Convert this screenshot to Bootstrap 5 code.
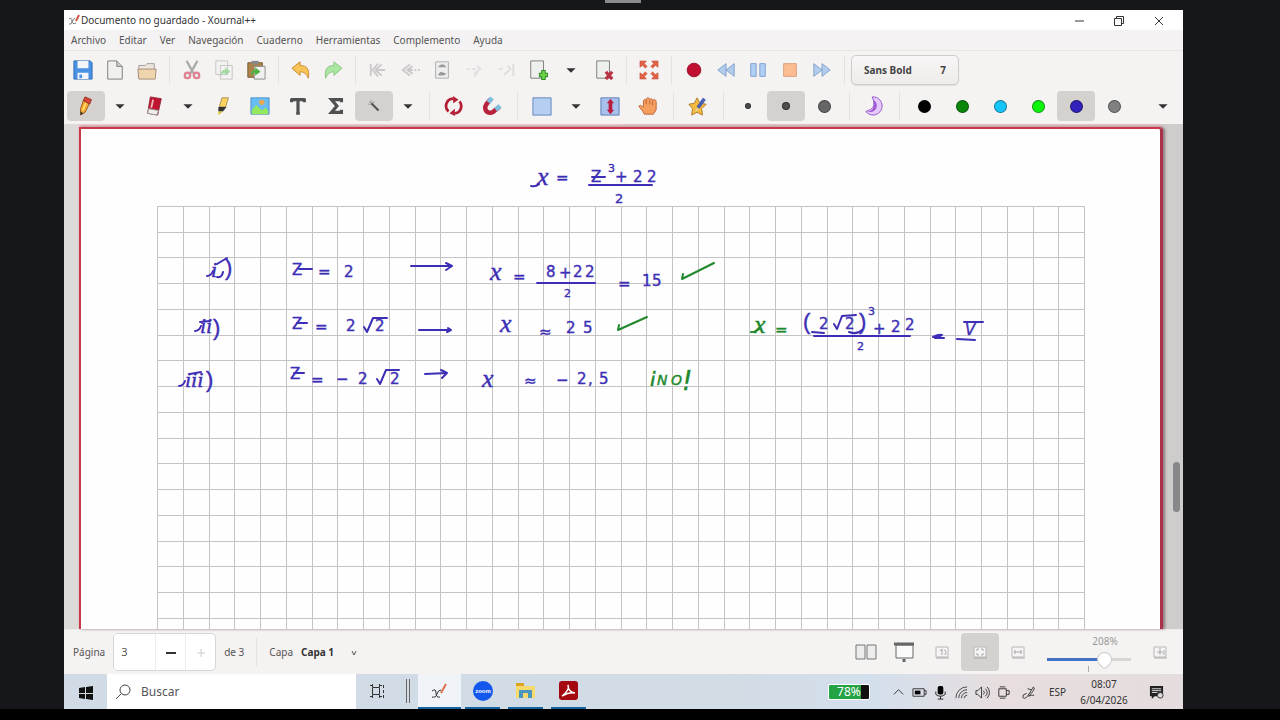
<!DOCTYPE html>
<html lang="es">
<head>
<meta charset="utf-8">
<meta name="viewport" content="width=device-width, initial-scale=1">
<title>Documento no guardado - Xournal++</title>
<link href="https://cdn.jsdelivr.net/npm/bootstrap@5.3.0/dist/css/bootstrap.min.css" rel="stylesheet">
<style>
  body { background: #15171a; font-family: "Noto Sans", sans-serif; font-size: 11px; line-height: 16px; color: #555; }
  button, input { font: inherit; color: inherit; }
  .stage { height: 100vh; min-height: 480px; }
  .grip { width: 36px; height: 3px; margin-left: 47.3%; background: #8a8b8c; }
  .top-edge { height: 10px; flex: none; }
  .app { margin: 0 97px 0 5%; background: #f5f2f2; min-height: 0; }
  .titlebar { height: 20px; background: #fff; color: #333; }
  .titlebar button, .menus button, .tool, .tray button { border: 0; background: none; padding: 0; }
  .titlebar button { width: 40px; }
  .titlebar h1 { font: 10px/20px "Noto Sans", sans-serif; padding-left: 1px; }
  .menus { height: 21px; gap: 13px; padding-left: 7px; background: #f4f2f2; border-bottom: 1px solid #e9e6e6; font-size: 10px; }
  .tools { height: 37px; }
  .tools.first { padding-left: 3px; }
  .tools.second { padding: 0 5px 0 3px; height: 36px; }
  .tool { height: 30px; width: 38px; border-radius: 4px; display: flex; align-items: center; justify-content: center; flex: none; }
  .first .tool { width: 32px; }
  .tool.drop { width: 30px; }
  .first .tool.drop { width: 34px; }
  .tool.on { background: #d5d1cf; }
  .tool svg { width: 20px; height: 20px; flex: none; }
  .status .tool svg { width: 22px; height: 22px; }
  .rule { width: 1px; height: 28px; background: #e6e2e2; margin: 0 6px 0 6px; flex: none; }
  .second .rule { margin-right: 5px; }
  .faded { opacity: .45; }
  .font-btn { width: 108px; height: 30px; border: 1px solid #d0cccb; border-radius: 5px; background: linear-gradient(#f8f6f6, #eeebea); font-weight: bold; font-size: 10px; padding: 0 12px; box-shadow: 0 1px 1px #ddd; color: #444; }
  .dot { border-radius: 50%; display: block; border: 1px solid rgba(0,0,0,.4); width: 13px; height: 13px; }
  .dot.s { width: 6px; height: 6px; background: #4d4d4d; }
  .dot.m { width: 8px; height: 8px; background: #4d4d4d; }
  .dot.l { background: #666; }
  .workspace { min-height: 0; background: linear-gradient(90deg, #dedada 0, #dedada 50%, #cfcccc 50%); padding: 3px 20px 0 15px; position: relative; }
  .sheet { background: #fefefe; border: 2px solid #c9384b; border-right: 3px solid #a93248; border-bottom: 0; border-top-right-radius: 4px; box-shadow: 2px 0 3px #8a7b7e, 0 -2px 2px #f3b9bd; overflow: hidden; }
  .sheet svg { width: 100%; height: 100%; display: block; }
  .thumb { position: absolute; right: 3px; top: 67%; width: 7px; height: 50px; border-radius: 4px; background: #88878a; }
  .ink { font-family: "DejaVu Sans", sans-serif; font-size: 15px; fill: #3d2fb5; stroke: #3d2fb5; stroke-width: .4px; }
  .ink .var { font-family: "Liberation Serif", serif; font-style: italic; font-size: 26px; }
  .ink .num { font-family: "Liberation Serif", serif; font-style: italic; font-size: 22px; }
  .ink .paren { font-size: 22px; font-family: "Liberation Sans", sans-serif; }
  .ink .tiny { font-size: 11px; }
  .ink .low { font-size: 13px; }
  .ink .ok { fill: #20882c; stroke: #20882c; }
  .ink .slant { font-style: italic; }
  .stroke { fill: none; stroke: #3d2fb5; stroke-width: 2; stroke-linecap: round; stroke-linejoin: round; }
  .stroke.ok { stroke: #20882c; }
  .status { height: 45px; font-size: 10px; border-top: 1px solid #eeebeb; padding-left: 1px; }
  .spin { width: 103px; height: 38px; border: 1px solid #d9d5d4; border-radius: 5px; background: #fff; overflow: hidden; }
  .spin input { width: 41px; border: 0; padding: 0 0 0 7px; font-size: 11px; }
  .spin button { flex: 1; border: 0; border-left: 1px solid #eee; background: none; padding: 0; }
  .status .tool { height: 38px; width: 38px; }
  .status .rule { margin: 0 4px 0 8px; }
  .pick { border: 0; background: none; width: 56px; padding: 0; appearance: none; font-weight: bold; color: #333; background: url("data:image/svg+xml,%3Csvg xmlns='http://www.w3.org/2000/svg' width='6' height='6'%3E%3Cpath d='M1 1l2 4 2-4' fill='none' stroke='%23555'/%3E%3C/svg%3E") no-repeat right 6px; }
  .zoomer { width: 84px; margin: 0 10px; position: relative; }
  .zoomer label { font-size: 10px; line-height: 14px; padding-left: 32px; margin-top: -2px; color: #999; }
  .zoomer input { appearance: none; width: 84px; height: 18px; background: linear-gradient(90deg, #4273c5 58px, #d8d5d5 58px) center / 100% 3px no-repeat; margin: 0; margin-top: 2px; }
  .zoomer input::-webkit-slider-thumb { appearance: none; width: 15px; height: 15px; background: #fff; border: 1px solid #ccc; border-radius: 50% 50% 4px 50%; transform: rotate(45deg); }
  .zoomer i { position: absolute; left: 41px; bottom: -4px; width: 1px; height: 6px; background: #aaa; }
  .taskbar { height: 35px; background: linear-gradient(90deg, #d0dbe6, #d2dce5 60%, #d3dfec 72%, #e8dedf 84%, #e4dcdd); color: #333; }
  .start { width: 43px; border: 0; background: none; padding: 0; }
  .search { width: 249px; background: #fff; border: 0; gap: 9px; padding-left: 8px; }
  .search input { border: 0; width: 160px; font-size: 12px; outline: 0; padding: 0; }
  .search input::placeholder { color: #555; opacity: 1; }
  .task { width: 43px; border: 0; background: none; padding: 0 0 2px; display: flex; align-items: center; justify-content: center; position: relative; }
  .task.split { width: 19px; }
  .task.open::after { content: ""; position: absolute; left: 4px; right: 4px; bottom: 0; height: 2px; background: #15639f; }
  .task.current { background: #f0f3f7; }
  .task.current::after { left: 0; right: 0; }
  .battery { width: 42px; height: 16px; border: 1px solid #fff; border-radius: 2px; background: linear-gradient(90deg, #23a344 32px, #101010 32px); color: #fff; font-size: 12px; line-height: 14px; margin-right: 18px; }
  .tray button { width: 21px; height: 22px; }
  .tray svg { width: 15px; height: 15px; }
  .lang { font-size: 10px; padding-left: 10px; }
  .clock { width: 56px; font-size: 10px; line-height: 16px; }
  .under { height: 11px; background: #000; flex: none; overflow: hidden; }
</style>
</head>
<body>
<svg width="0" height="0" class="position-absolute" aria-hidden="true">
  <defs>
    <symbol id="tri" viewBox="0 0 22 22"><path d="M6 9h10l-5 5z" fill="#333"/></symbol>
    <symbol id="undo" viewBox="0 0 22 22"><path d="M1 9 10 2v4c7 0 11 4 9 14-2-5-5-7-9-7v4z" fill="#f9c455" stroke="#c4872d"/></symbol>
    <symbol id="rew" viewBox="0 0 22 22"><path d="M11 4v14L2 11zM20 4v14l-9-7z" fill="#b4ccec" stroke="#7d9ecb"/></symbol>
    <symbol id="sheet" viewBox="0 0 22 22"><path d="M3 1h14v19H3z" fill="#eef0ee" stroke="#777"/></symbol>
    <symbol id="zbox" viewBox="0 0 22 22"><path d="M5 6h12v10H5z" fill="#f6f4f4" stroke="#b9b6b6"/><path d="M5 17h13" stroke="#aaa"/></symbol>
  </defs>
</svg>
<div class="stage d-flex flex-column">
  <div class="top-edge"><div class="grip"></div></div>
  <main class="app flex-fill d-flex flex-column">
    <header class="titlebar d-flex align-items-center flex-shrink-0">
      <svg width="12" height="12" viewBox="0 0 12 12" class="ms-1 flex-shrink-0"><path d="M1 5q3-2 3 2t4 2M7 4Q5 5 4 8t-3 2" fill="none" stroke="#777"/><path d="M8 7l3-6" stroke="#d35445" stroke-width="2"/></svg>
      <h1 class="m-0 flex-fill">Documento no guardado - Xournal++</h1>
      <button aria-label="Minimizar"><svg width="10" height="10"><path d="M1 5h9" stroke="#333"/></svg></button>
      <button aria-label="Restaurar"><svg width="10" height="10" fill="none" stroke="#333"><path d="M.5 2.500h7v7h-7zM2.500 2.500v-2h7v7h-2"/></svg></button>
      <button aria-label="Cerrar" class="me-1"><svg width="10" height="10"><path d="M1 1l8 8M9 1L1 9" stroke="#333"/></svg></button>
    </header>
    <nav class="menus d-flex align-items-center flex-shrink-0" aria-label="Menú">
      <button>Archivo</button><button>Editar</button><button>Ver</button><button>Navegación</button><button>Cuaderno</button><button>Herramientas</button><button>Complemento</button><button>Ayuda</button>
    </nav>
    <div class="tools first d-flex align-items-center flex-shrink-0" role="toolbar" aria-label="Archivo y audio">
      <button class="tool" aria-label="Guardar"><svg viewBox="0 0 22 22"><path d="M1 1h18l2 2v18H1z" fill="#4b91e3" stroke="#2868b4"/><path d="M5 1h12v8H5zM5 14h12v7H5z" fill="#f3f6fa"/><path d="M7 16h3v4H7z" fill="#4b91e3"/></svg></button>
      <button class="tool" aria-label="Nuevo"><svg viewBox="0 0 22 22"><path d="M3 1h10l6 6v14H3z" fill="#f0f0ef" stroke="#777"/><path d="M13 1v6h6" fill="#ccc" stroke="#777"/></svg></button>
      <button class="tool" aria-label="Abrir"><svg viewBox="0 0 22 22"><path d="M2 19V6h7l2-2h8v15z" fill="#eee6dc" stroke="#999"/><path d="M1 10h20l-1 11H2z" fill="#efd4ae" stroke="#a18a71"/></svg></button>
      <span class="rule"></span>
      <button class="tool" aria-label="Cortar"><svg viewBox="0 0 22 22"><path d="M5 1l8 14M17 1L9 15" stroke="#aaa" stroke-width="2.500"/><g fill="none" stroke="#dc8291" stroke-width="2.500"><circle cx="6" cy="17" r="3"/><circle cx="16" cy="17" r="3"/></g></svg></button>
      <button class="tool" aria-label="Copiar"><svg viewBox="0 0 22 22"><path d="M2 1h13v15H2zM7 6h13v15H7z" fill="#f3f4f2" stroke="#c2c2c2"/><path d="M18 13l-6-5v3c-4 0-5 3-4 7 1-3 2-4 4-4v3z" fill="#a3d9a0"/></svg></button>
      <button class="tool" aria-label="Pegar"><svg viewBox="0 0 22 22"><path d="M2 3h16v16H2z" fill="#ad8347" stroke="#755a31"/><path d="M6 1h8v4H6z" fill="#888"/><path d="M9 7h12v14H9z" fill="#eff1ef" stroke="#888"/><path d="M16 13l-6-5v3c-4 0-5 2-4 7 1-3 2-4 4-4v3z" fill="#4fb243"/></svg></button>
      <span class="rule"></span>
      <button class="tool" aria-label="Deshacer"><svg><use href="#undo"/></svg></button>
      <button class="tool" aria-label="Rehacer"><svg viewBox="0 0 22 22"><path d="M21 9 12 2v4C5 6 1 10 3 20c2-5 5-7 9-7v4z" fill="#a9e7a0" stroke="#87c181"/></svg></button>
      <span class="rule"></span>
      <button class="tool faded" aria-label="Primera página"><svg viewBox="0 0 22 22"><path d="M3 4v14M11 4l-6 7 6 7M8 11l7-6M8 11l7 6M10 11h9" fill="none" stroke="#999" stroke-width="2"/></svg></button>
      <button class="tool faded" aria-label="Página anterior"><svg viewBox="0 0 22 22"><path d="M11 5l-8 6 8 6M14 7l-6 4 6 4M8 11h6M16 11h2M20 11h2" fill="none" stroke="#999" stroke-width="2"/></svg></button>
      <button class="tool" aria-label="Ir a página"><svg viewBox="0 0 22 22"><path d="M4 2h14v18H4z" fill="#eee" stroke="#aaa"/><path d="M7 7l3-2h3l3 3H7zM7 15l3-2 6 2-3 2H7z" fill="#999"/></svg></button>
      <button class="tool faded" aria-label="Página siguiente"><svg viewBox="0 0 22 22"><path d="M3 10h4M9 10h4M11 15l7-5-4-4M11 18l4-4" fill="none" stroke="#ccc" stroke-width="2"/></svg></button>
      <button class="tool faded" aria-label="Última página"><svg viewBox="0 0 22 22"><path d="M3 10h4M9 16l7-6-3-4M19 4v14" fill="none" stroke="#c4c4c4" stroke-width="2"/></svg></button>
      <button class="tool" aria-label="Insertar página"><svg viewBox="0 0 22 22"><use href="#sheet"/><path d="M17 11v11M12 16.500h10" stroke="#348b24" stroke-width="5"/><path d="M17 12v9M13 16.500h8" stroke="#67d148" stroke-width="3"/></svg></button>
      <button class="tool drop" aria-label="Tipo de página"><svg><use href="#tri"/></svg></button>
      <button class="tool" aria-label="Eliminar página"><svg viewBox="0 0 22 22"><use href="#sheet"/><path d="M13 13l7 8M20 13l-7 8" stroke="#b93442" stroke-width="3.500"/></svg></button>
      <span class="rule"></span>
      <button class="tool" aria-label="Pantalla completa"><svg viewBox="0 0 22 22"><path d="M1 1h7L6 4l3 3-2 2-3-3-3 2zM21 1h-7l2 3-3 3 2 2 3-3 3 2zM1 21h7l-2-3 3-3-2-2-3 3-3-2zM21 21h-7l2-3-3-3 2-2 3 3 3-2z" fill="#e36346" stroke="#bd4532" stroke-width=".5"/></svg></button>
      <span class="rule"></span>
      <button class="tool" aria-label="Grabar"><svg viewBox="0 0 22 22"><circle cx="11" cy="11" r="7.500" fill="#c10f31" stroke="#920d28"/></svg></button>
      <button class="tool" aria-label="Retroceder"><svg><use href="#rew"/></svg></button>
      <button class="tool" aria-label="Pausa"><svg viewBox="0 0 22 22"><path d="M3 4h6v14H3zM13 4h6v14h-6z" fill="#afcff5" stroke="#7d9ecb"/></svg></button>
      <button class="tool" aria-label="Detener"><svg viewBox="0 0 22 22"><path d="M4 4h14v14H4z" fill="#fbbd91" stroke="#dc9c72"/></svg></button>
      <button class="tool" aria-label="Avanzar"><svg viewBox="0 0 22 22"><path d="M2 4v14l9-7zM11 4v14l9-7z" fill="#b4ccec" stroke="#7d9ecb"/></svg></button>
      <span class="rule"></span>
      <button class="font-btn d-flex justify-content-between align-items-center"><span>Sans Bold</span><span>7</span></button>
    </div>
    <div class="tools second d-flex align-items-center flex-shrink-0" role="toolbar" aria-label="Herramientas">
      <button class="tool on" aria-label="Lápiz"><svg viewBox="0 0 22 22"><path d="M8 5l7 3-5 10-5 3V14z" fill="#f4a730" stroke="#915a22"/><path d="M12 6l-5 10" stroke="#ffdc65" stroke-width="2"/><path d="M8 5l2-4 7 3-2 5z" fill="#d94338" stroke="#932f28"/><path d="M5 17v4l3-2z" fill="#333"/></svg></button>
      <button class="tool drop" aria-label="Opciones de lápiz"><svg><use href="#tri"/></svg></button>
      <button class="tool" aria-label="Borrador"><svg viewBox="0 0 22 22"><path d="M7 1l12 2-4 18-11-2z" fill="#c0152f" stroke="#8f2436"/><path d="M5 14l11 2-2 5-10-2z" fill="#eee" stroke="#999"/><path d="M10 4L8 13" stroke="#edbac1" stroke-width="2"/></svg></button>
      <button class="tool drop" aria-label="Opciones de borrador"><svg><use href="#tri"/></svg></button>
      <button class="tool" aria-label="Resaltador"><svg viewBox="0 0 22 22"><path d="M11 2h7l-3 10H8z" fill="#ffd25d" stroke="#a38c4d"/><path d="M7 12h9l-4 5H7z" fill="#333"/><path d="M7 17h5l-5 4z" fill="#ddc129"/></svg></button>
      <button class="tool" aria-label="Imagen"><svg viewBox="0 0 22 22"><path d="M1 2h20v18H1z" fill="#68bdf3" stroke="#4a8fc4"/><circle cx="13" cy="7" r="3" fill="#e9a751"/><path d="M2 15l5-5 6 6 4-3 3 3v4H2z" fill="#95e75c"/></svg></button>
      <button class="tool" aria-label="Texto"><svg viewBox="0 0 22 22"><path d="M3 4h16M4 3v4M18 3v4M11 4v15M9 19h4" stroke="#505050" stroke-width="3.500"/></svg></button>
      <button class="tool" aria-label="LaTeX"><svg viewBox="0 0 22 22"><path d="M17 7V4H6l6 7-6 7h11v-3" fill="none" stroke="#505050" stroke-width="3.500"/></svg></button>
      <button class="tool on" aria-label="Reconocer formas"><svg viewBox="0 0 22 22"><path d="M8 8l8 8" stroke="#555" stroke-width="2.500"/><path d="M8 5v2M5 9h2M6 6l2 2M11 6l-1 2" stroke="#888"/></svg></button>
      <button class="tool drop" aria-label="Tipo de dibujo"><svg><use href="#tri"/></svg></button>
      <span class="rule"></span>
      <button class="tool" aria-label="Girar"><svg viewBox="0 0 22 22"><path d="M5 17A8 8 0 0 1 10 3M17 6a8 8 0 0 1-4 13M13 19l-1 0" fill="none" stroke="#b51f35" stroke-width="3"/><path d="M10 0l6 4-6 4zM12 14l-6 5 6 3z" fill="#b51f35"/></svg></button>
      <button class="tool" aria-label="Ajustar a cuadrícula"><svg viewBox="0 0 22 22"><path d="M9 4l-4 5c-5 7 4 13 9 7l5-4" fill="none" stroke="#b9223d" stroke-width="5"/><path d="M7 7l4-5M15 15l5-4" stroke="#7ebddd" stroke-width="5"/></svg></button>
      <span class="rule"></span>
      <button class="tool" aria-label="Selección"><svg viewBox="0 0 22 22"><path d="M1 2h20v19H1z" fill="#b5cef2" stroke="#5d82b8"/></svg></button>
      <button class="tool drop" aria-label="Tipo de selección"><svg><use href="#tri"/></svg></button>
      <button class="tool" aria-label="Espacio vertical"><svg viewBox="0 0 22 22"><path d="M1 2h20v19H1z" fill="#a7c1ec" stroke="#557bb4"/><path d="M11.500 3l4 5h-2v7h2l-4 5-4-5h2V8h-2z" fill="#b91e3f"/></svg></button>
      <button class="tool" aria-label="Mano"><svg viewBox="0 0 22 22"><path d="M7 20c-2-5-6-7-6-9 2-2 4 1 5 1L6 5c1-2 3-1 3 0 0-4 3-4 4-1 1-2 3-1 3 1 2-2 4-1 4 2v8l-3 5z" fill="#f69d60" stroke="#bd6034"/><path d="M9 5v4M13 5v4M16 6v4" stroke="#bd6034"/></svg></button>
      <span class="rule"></span>
      <button class="tool" aria-label="Predeterminado"><svg viewBox="0 0 22 22"><path d="M10 2l3 6 7 1-5 5 1 7-6-3-6 3 1-7-4-5 6-1z" fill="#f6bb3d" stroke="#a9792c"/><path d="M18 3l-7 10" stroke="#4961b0" stroke-width="4"/><path d="M10 13l-3 5 5-3z" fill="#e1d2a1"/></svg></button>
      <span class="rule"></span>
      <button class="tool" aria-label="Fino"><span class="dot s"></span></button>
      <button class="tool on" aria-label="Medio"><span class="dot m"></span></button>
      <button class="tool" aria-label="Grueso"><span class="dot l"></span></button>
      <span class="rule"></span>
      <button class="tool" aria-label="Relleno"><svg viewBox="0 0 22 22"><path d="M9 1a10 10 0 1 1-7 16l5-2q7-4 2-14z" fill="#e5c9fa" stroke="#9252c8"/><path d="M10 4a7 7 0 1 1-6 13q9-1 6-13z" fill="#9f5bd5"/></svg></button>
      <span class="rule"></span>
      <button class="tool" aria-label="Negro"><span class="dot" style="background:#000"></span></button>
      <button class="tool" aria-label="Verde"><span class="dot" style="background:#0a870a"></span></button>
      <button class="tool" aria-label="Celeste"><span class="dot" style="background:#15c5f7"></span></button>
      <button class="tool" aria-label="Verde claro"><span class="dot" style="background:#0bf50b"></span></button>
      <button class="tool on" aria-label="Azul"><span class="dot" style="background:#3322bb"></span></button>
      <button class="tool" aria-label="Gris"><span class="dot" style="background:#808080"></span></button>
      <button class="tool drop ms-auto" aria-label="Más"><svg><use href="#tri"/></svg></button>
    </div>
    <section class="workspace flex-fill d-flex" aria-label="Página 3">
      <div class="sheet flex-fill">
        <svg viewBox="81 129 1079 500" preserveAspectRatio="xMinYMin slice">
          <defs><pattern id="squares" width="103" height="103" x="157" y="206" patternUnits="userSpaceOnUse"><path d="M.5 0v103M26.500 0v103M52.500 0v103M77.500 0v103M0 .5h103M0 26.500h103M0 51.500h103M0 77.500h103" stroke="#c4c4c4"/></pattern></defs>
          <path d="M157 206h928v430H157z" fill="url(#squares)"/>
          <g class="ink">
            <text class="var" x="537" y="185">x</text><text x="556" y="183">=</text>
            <text x="591" y="182">Z</text><text class="tiny" x="608" y="172">3</text><text x="615" y="182">+</text><text x="633" y="182">2</text><text x="647" y="182">2</text><text class="low" x="615" y="203">2</text>

            <text class="num" x="211" y="277">i</text><text class="paren" x="225" y="275">)</text>
            <text x="292" y="275">Z</text><text x="318" y="277">=</text><text x="344" y="277">2</text>
            <text class="var" x="490" y="280">x</text><text x="513" y="282">=</text><text x="546" y="277">8</text><text x="559" y="278">+</text><text x="573" y="277">2</text><text x="585" y="277">2</text><text class="tiny" x="564" y="297">2</text>
            <text x="618" y="289">=</text><text x="642" y="286">1</text><text x="652" y="286">5</text>

            <text class="num" x="200" y="333">ii</text><text class="paren" x="213" y="335">)</text>
            <text x="292" y="329">Z</text><text x="315" y="332">=</text><text x="346" y="331">2</text><text x="375" y="331">2</text>
            <text class="var" x="500" y="332">x</text><text x="539" y="337">≈</text><text x="566" y="333">2</text><text x="583" y="333">5</text>

            <text class="num" x="185" y="387">iii</text><text class="paren" x="206" y="387">)</text>
            <text x="290" y="379">Z</text><text x="311" y="385">=</text><text x="336" y="384">−</text><text x="358" y="384">2</text><text x="390" y="384">2</text>
            <text class="var" x="482" y="387">x</text><text x="524" y="386">≈</text><text x="556" y="385">−</text><text x="577" y="384">2</text><text x="588" y="384">,</text><text x="599" y="384">5</text>
            <g class="ok slant"><text x="649" y="382" font-size="20">¡</text><text x="657" y="385" font-size="14">N</text><text x="671" y="385" font-size="14">O</text><text x="682" y="390" font-size="26">!</text></g>

            <g class="ok"><text class="var" x="754" y="333">x</text><text x="775" y="335">=</text></g>
            <text class="paren" x="803" y="329">(</text><text x="819" y="329">2</text><text x="845" y="329">2</text><text class="paren" x="859" y="329">)</text><text class="tiny" x="868" y="315">3</text><text x="873" y="334">+</text><text x="891" y="332">2</text><text x="905" y="330">2</text><text class="tiny" x="857" y="350">2</text><text x="965" y="335" class="slant">V</text>
          </g>
          <g class="stroke">
            <path d="M589 185h63M537 283h58M814 336h96"/>
            <path d="M592 177h13M299 269h13M297 323h10M294 373h10"/>
            <path d="M531 186q5 1 8-2M207 276q4 0 6-5M217 277q5 1 6-5M217 264l10-6M195 331q4 0 6-5M200 322l10-1M179 386q4 0 6-5M190 374l11-2"/>
            <path d="M411 266h41l-6-3m6 3l-6 4M419 330h32l-3-2m3 2l-4 2M425 374l22-1-6-3m6 3l-5 5"/>
            <path d="M364 327l3 5 6-14h14M377 379l3 5 6-14h13M834 324l3 5 5-13 14-1"/>
            <path d="M812 332l12 1M849 332q8 3 13-2M933 337q6-3 9-2l-7 3 9 0M964 322h19M957 339l18 1"/>
          </g>
          <g class="stroke ok"><path d="M683 274l-1 5 32-16M619 325l-1 5 29-13M751 332q6 0 9-4"/></g>
        </svg>
      </div>
      <div class="thumb"></div>
    </section>
    <footer class="status d-flex align-items-center flex-shrink-0">
      <label for="page" class="mx-2">Página</label>
      <div class="spin d-flex"><input id="page" value="3"><button aria-label="Menos"><svg width="10" height="10"><path d="M0 5h10" stroke="#333" stroke-width="2"/></svg></button><button aria-label="Más"><svg width="10" height="10"><path d="M1 5h8M5 1v8" stroke="#ccc"/></svg></button></div>
      <span class="ps-2 pe-1">de 3</span><span class="rule"></span>
      <label for="layer" class="mx-2">Capa</label>
      <select id="layer" class="pick"><option>Capa 1</option></select>
      <span class="flex-fill"></span>
      <button class="tool" aria-label="Páginas emparejadas"><svg viewBox="0 0 22 22"><path d="M1 4h9v14H1zM12 4h9v14h-9z" fill="#ececec" stroke="#777"/></svg></button>
      <button class="tool" aria-label="Presentación"><svg viewBox="0 0 22 22"><path d="M3 4h17v13H3z" fill="#fafafa" stroke="#666"/><path d="M1 3h20M11 18v3" stroke="#666" stroke-width="3"/></svg></button>
      <button class="tool" aria-label="Zoom 100"><svg viewBox="0 0 22 22"><use href="#zbox"/><path d="M9 10l2-2v6M13 9q3 0 1 5" fill="none" stroke="#aaa"/></svg></button>
      <button class="tool on" aria-label="Ajustar zoom"><svg viewBox="0 0 22 22"><use href="#zbox"/><path d="M8 10V8h2M12 8h2v2M8 12v2h2M14 12v2h-2" fill="none" stroke="#aaa"/></svg></button>
      <button class="tool" aria-label="Ancho"><svg viewBox="0 0 22 22"><use href="#zbox"/><path d="M7 11h8M8 9v4M14 9v4" stroke="#aaa"/></svg></button>
      <div class="zoomer d-flex flex-column justify-content-center"><label for="zoom" class="text-center">208%</label><input id="zoom" type="range" min="0" max="100" value="73"><i></i></div>
      <button class="tool" aria-label="Acercar"><svg viewBox="0 0 22 22"><use href="#zbox"/><path d="M11 7v7M8 11h6M15 9v5" stroke="#aaa"/></svg></button>
      <span class="ps-1"></span>
    </footer>
    <div class="taskbar d-flex flex-shrink-0">
      <button class="start" aria-label="Inicio"><svg width="14" height="14" viewBox="0 0 14 14"><path d="M0 2l6-1v6H0zM7 1l7-1v7H7zM0 8h6v5l-6-1zM7 8h7v6l-7-1z" fill="#111"/></svg></button>
      <div class="search d-flex align-items-center"><svg width="17" height="16" viewBox="0 0 17 16"><g fill="none" stroke="#444"><circle cx="10" cy="6" r="5"/><path d="M6 10l-5 5"/></g></svg><input placeholder="Buscar" aria-label="Buscar"></div>
      <button class="task" aria-label="Vista de tareas"><svg width="15" height="14" fill="none" stroke="#333"><path d="M2.500 3.500h7v7h-7zM0 1.500h3M9 1.500h3M0 12.500h3M9 12.500h3M2.500 0v3M2.500 11v3M9.500 0v3M9.500 11v3M13.500 1v3M13.500 6v3M13.500 11v3"/></svg></button>
      <span class="task split"><svg width="5" height="24"><path d="M.5 0v24M3.500 0v24" stroke="#666"/></svg></span>
      <button class="task open current" aria-label="Xournal++"><svg width="17" height="18" viewBox="0 0 17 18"><path d="M1 9q4-3 4 2t4 4M10 8Q7 8 6 12t-5 3" fill="none" stroke="#333"/><path d="M10 11l5-9" stroke="#dc724c" stroke-width="2"/></svg></button>
      <button class="task open" aria-label="Zoom"><svg width="22" height="22"><circle cx="11" cy="11" r="10" fill="#1457ed"/><text x="11" y="13" text-anchor="middle" fill="#fff" font-family="Liberation Sans" font-weight="bold" font-size="6">zoom</text></svg></button>
      <button class="task open" aria-label="Explorador"><svg width="20" height="18"><path d="M0 1h8v3H0z" fill="#d9a520"/><path d="M0 4h19v12H0z" fill="#f7da6c"/><path d="M3 16V8h13v8h-4v-5H7v5z" fill="#4c96bd"/></svg></button>
      <button class="task open" aria-label="Acrobat"><svg width="19" height="19"><rect width="19" height="19" rx="3" fill="#a5080f"/><path d="M3 15q8-6 6-11 0 7 7 8-6-1-13 3" fill="none" stroke="#fff" stroke-width="1.500"/></svg></button>
      <span class="flex-fill"></span>
      <div class="tray d-flex align-items-center">
        <span class="battery text-center">78%</span>
        <button aria-label="Ocultos"><svg viewBox="0 0 16 16"><path d="M3 10l5-5 5 5" fill="none" stroke="#333"/></svg></button>
        <button aria-label="Batería"><svg viewBox="0 0 16 16"><path d="M1 4h12v8H1zM13 6h2v4h-2" fill="none" stroke="#333"/><path d="M3 6h6v4H3z"/></svg></button>
        <button aria-label="Micrófono"><svg viewBox="0 0 16 16"><rect x="5" y="1" width="6" height="9" rx="2"/><path d="M3 7v3q5 4 10 0V7M8 12v3M5 15h6" fill="none" stroke="#222"/></svg></button>
        <button aria-label="Wifi"><svg viewBox="0 0 16 16" fill="none" stroke="#444"><path d="M2 14A12 12 0 0 1 14 2M5 14a9 9 0 0 1 9-9M8 14a6 6 0 0 1 6-6M11 14a3 3 0 0 1 3-3"/></svg></button>
        <button aria-label="Volumen"><svg viewBox="0 0 16 16" fill="none" stroke="#333"><path d="M1 6h2l4-4v12l-4-4H1zM9 6q2 2 0 4M11 4q4 4 0 8M13 2q5 6 0 12"/></svg></button>
        <button aria-label="Dispositivo"><svg viewBox="0 0 16 16" fill="none" stroke="#333"><path d="M3 4h8v8H3zM11 6h3v4h-3M4 2h6M4 14h6"/></svg></button>
        <button aria-label="Lápiz digital" class="ms-1"><svg viewBox="0 0 16 16" fill="none" stroke="#333"><path d="M6 9Q1 10 2 13t5-1l5-8q1-3 2-1t-6 9q4-2 6-1M7 4l4 1"/></svg></button>
        <span class="lang">ESP</span>
        <div class="clock text-center ms-2 ps-1 text-nowrap">08:07<br>6/04/2026</div>
        <button aria-label="Notificaciones" class="ms-3 me-3"><svg viewBox="0 0 16 16"><path d="M1 1h14v11H6l-3 3v-3H1z" fill="#222"/><path d="M3 4h10M3 6h10M3 8h6" stroke="#ddd"/><circle cx="12" cy="11" r="3" fill="#ddd" stroke="#333"/></svg></button>
      </div>
    </div>
  </main>
  <div class="under"><svg width="100%" height="11" viewBox="0 0 1280 11" aria-hidden="true"><circle cx="79" cy="11" r="3" fill="#c41236"/><circle cx="682" cy="15" r="6" fill="#ccc"/><circle cx="848" cy="16" r="8" fill="none" stroke="#ddd" stroke-width="2"/></svg></div>
</div>
<script src="https://cdn.jsdelivr.net/npm/bootstrap@5.3.0/dist/js/bootstrap.bundle.min.js"></script>
</body>
</html>
